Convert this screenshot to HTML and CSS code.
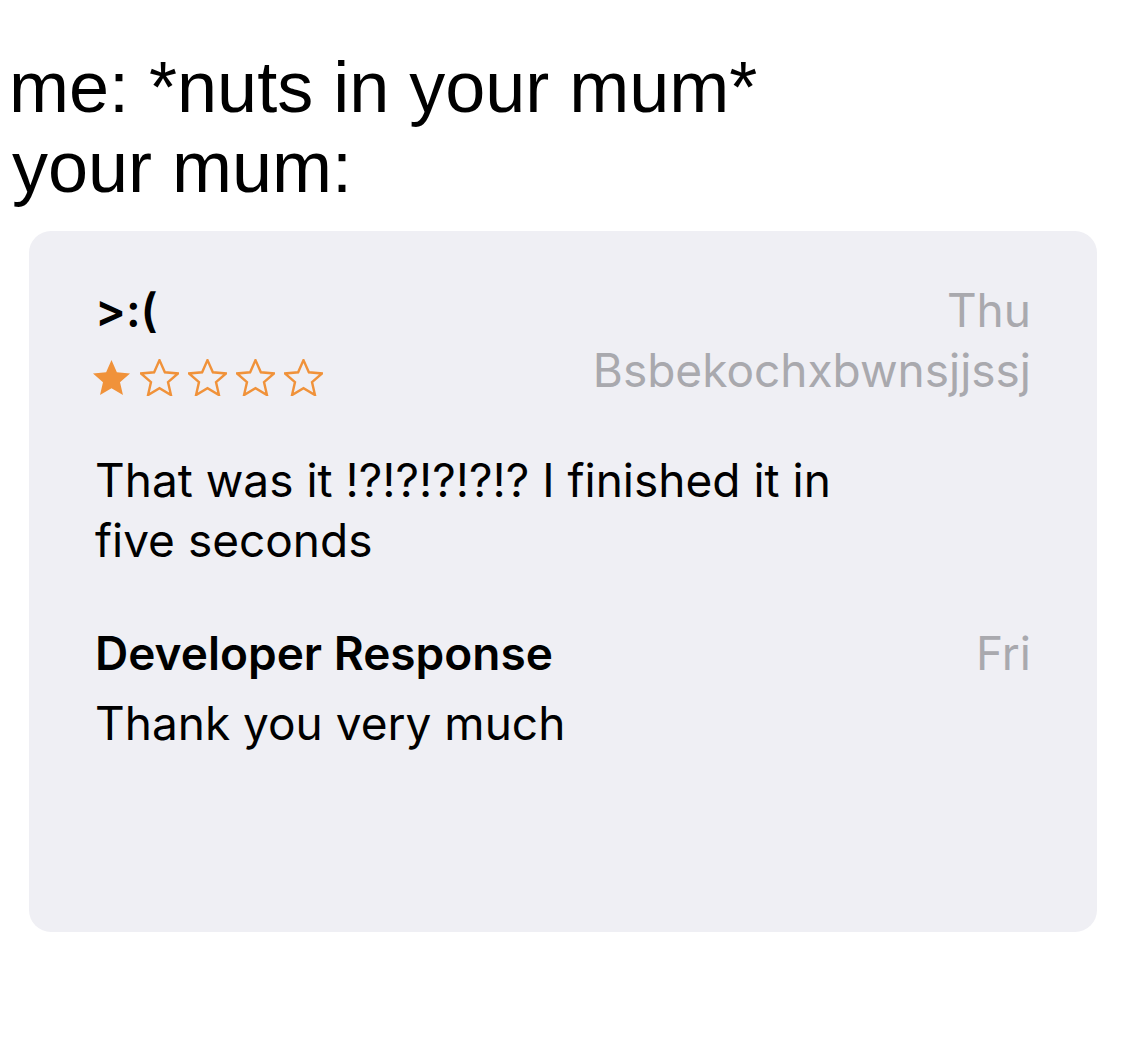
FILE: index.html
```html
<!DOCTYPE html>
<html>
<head>
<meta charset="utf-8">
<link rel="stylesheet" href="styles.css">
</head>
<body>
<div class="caption">
  <div class="line">me: *nuts in your mum*</div>
  <div class="line second">your mum:</div>
</div>
<div class="card">
  <div class="row">
    <div class="title">&gt;:(</div>
    <div class="meta">Thu</div>
  </div>
  <div class="row">
    <div class="stars">
      <svg class="star" viewBox="1.5 1.6 21 20"><path class="full" d="M12 2.2l2.9 6.6 7.1.6-5.4 4.7 1.6 7-6.2-3.7-6.2 3.7 1.6-7L2 9.4l7.1-.6z"/></svg>
      <svg class="star" viewBox="1.5 1.6 21 20"><path class="empty" d="M12 2.2l2.9 6.6 7.1.6-5.4 4.7 1.6 7-6.2-3.7-6.2 3.7 1.6-7L2 9.4l7.1-.6z"/></svg>
      <svg class="star" viewBox="1.5 1.6 21 20"><path class="empty" d="M12 2.2l2.9 6.6 7.1.6-5.4 4.7 1.6 7-6.2-3.7-6.2 3.7 1.6-7L2 9.4l7.1-.6z"/></svg>
      <svg class="star" viewBox="1.5 1.6 21 20"><path class="empty" d="M12 2.2l2.9 6.6 7.1.6-5.4 4.7 1.6 7-6.2-3.7-6.2 3.7 1.6-7L2 9.4l7.1-.6z"/></svg>
      <svg class="star" viewBox="1.5 1.6 21 20"><path class="empty" d="M12 2.2l2.9 6.6 7.1.6-5.4 4.7 1.6 7-6.2-3.7-6.2 3.7 1.6-7L2 9.4l7.1-.6z"/></svg>
    </div>
    <div class="meta">Bsbekochxbwnsjjssj</div>
  </div>
  <p class="body">That was it !?!?!?!?!? I finished it in<br>five seconds</p>
  <div class="row dev">
    <div class="title">Developer Response</div>
    <div class="meta">Fri</div>
  </div>
  <p class="response">Thank you very much</p>
</div>
</body>
</html>
```
FILE: styles.css
```css
html, body {
  margin: 0;
  padding: 0;
  background: #ffffff;
}
.caption {
  padding: 47px 0 0 9px;
  font-family: "Liberation Sans", Arial, sans-serif;
  font-size: 72px;
  line-height: 80px;
  color: #000;
}
.second {
  padding-left: 3px;
}
.card {
  margin: 24px 0 0 29px;
  width: 1068px;
  height: 701px;
  box-sizing: border-box;
  padding: 49px 66px 0 66px;
  background: #efeff4;
  border-radius: 22px;
  font-family: Inter, "Noto Sans", sans-serif;
  font-size: 46px;
  line-height: 60px;
  color: #000;
}
.row {
  display: flex;
  justify-content: space-between;
  align-items: center;
  height: 60px;
}
.title {
  font-weight: 600;
}
.meta {
  color: #a9a9ae;
}
.stars {
  display: flex;
  gap: 9px;
  margin-left: -3px;
  margin-top: 14px;
}
.star {
  width: 39px;
  height: 37px;
}
.full {
  fill: #f0923a;
}
.empty {
  fill: none;
  stroke: #f0923a;
  stroke-width: 1.3;
  stroke-linejoin: miter;
}
.body {
  margin: 50px 0 0 0;
}
.dev {
  margin-top: 53px;
}
.response {
  margin: 10px 0 0 0;
}
```
